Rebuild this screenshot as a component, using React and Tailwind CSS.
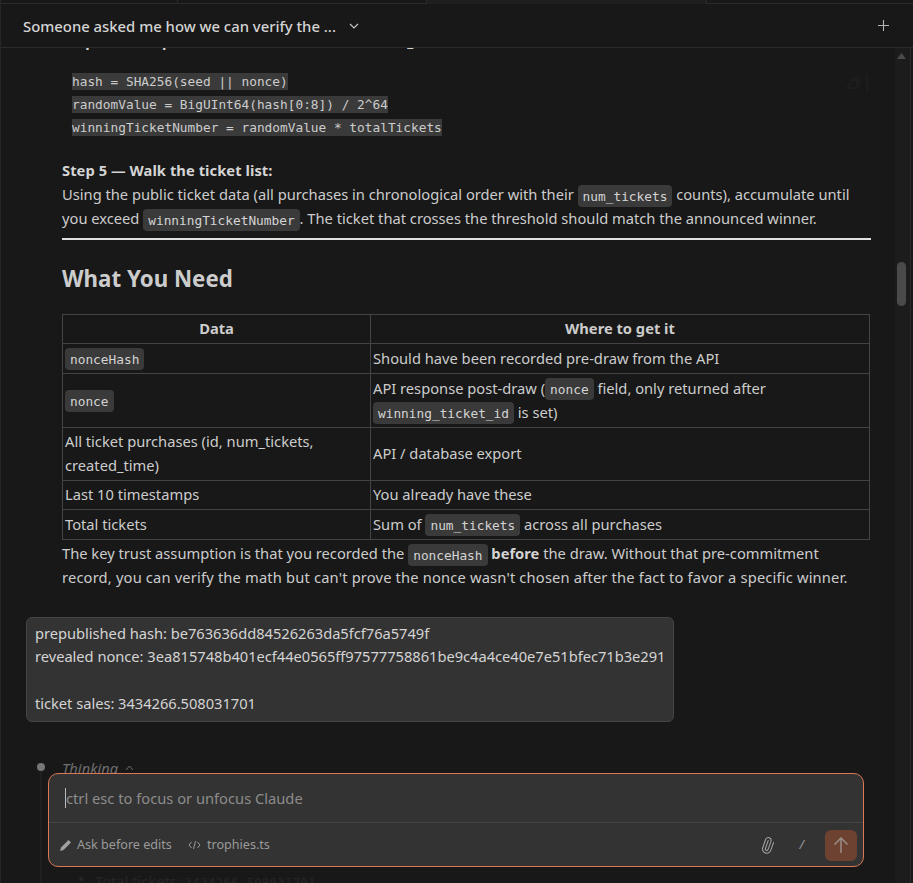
import React from "react";
import { Paperclip } from "lucide-react";

const C = ({ children }) => (
  <code className="bg-[#3a3a3a] text-[#d4d4d4] rounded-[4px] px-[5px] py-[3.5px] text-[12.8px] leading-none [font-family:'DejaVu_Sans_Mono',monospace]">{children}</code>
);

const rows = [
  ["h-[30px]", <C>nonceHash</C>, "Should have been recorded pre-draw from the API"],
  ["h-[54px]", <C>nonce</C>, <>API response post-draw (<C>nonce</C> field, only returned after<br /><C>winning_ticket_id</C> is set)</>],
  ["h-[53px]", <>All ticket purchases (id, num_tickets,<br />created_time)</>, "API / database export"],
  ["h-[29px]", "Last 10 timestamps", "You already have these"],
  ["h-[30px]", "Total tickets", <>Sum of <C>num_tickets</C> across all purchases</>],
];

const preLine = "bg-[#3a3a3a] h-[17px] leading-[17px]";
const cell = "border border-[#444444] px-[2px] pt-0 pb-[2px]";

export default function App() {
  return (
    <div className="w-[913px] h-[883px] relative overflow-hidden bg-[#181818] text-[#cccccc] text-[14.7px] leading-[24px] [font-family:'Noto_Sans',sans-serif] flex flex-col border-l border-[#262626]">
      <div className="h-[4px] shrink-0 flex">
        <div className="w-[177px] border-b border-r border-[#2b2b2b]" />
        <div className="w-[249px] border-b border-r border-[#2b2b2b]" />
        <div className="w-[279px] bg-[#1f1f1f]" />
        <div className="flex-1 border-b border-l border-[#2b2b2b]" />
      </div>
      <div className="h-[44px] shrink-0 flex items-center justify-between pl-[22px] pr-[23px] border-b border-[#2b2b2b]">
        <div className="flex items-center gap-[12px] text-[#d4d4d4] font-medium text-[14.85px]"><span>Someone asked me how we can verify the ...</span>
          <svg width="12" height="12" viewBox="0 0 12 12" fill="none" stroke="#c4c4c4" strokeWidth="1.2"><path d="M2 4l4 4 4-4" /></svg>
        </div>
        <svg width="13" height="13" viewBox="0 0 13 13" stroke="#b4b4b4" strokeWidth="1.1"><path d="M6.500 1v11M1 6.500h11" /></svg>
      </div>
      <div className="flex-1 overflow-hidden relative pl-[61px] pr-[42px]">
        <div className="-mt-[19px]">
          <p className="font-bold text-[#d4d4d4] whitespace-nowrap">Step 4 — Compute the random value and ticket_number:</p>
          <div className="relative pl-[10px] mt-[20px] flex flex-col items-start text-[12.8px] [font-family:'DejaVu_Sans_Mono',monospace]">
            <span className={preLine}>hash = SHA256(seed || nonce)</span>
            <span className={preLine + " mt-[6px]"}>randomValue = BigUInt64(hash[0:8]) / 2^64</span>
            <span className={preLine + " mt-[6px]"}>winningTicketNumber = randomValue * totalTickets</span>
            <svg className="absolute left-[783px] top-[1px]" width="24" height="18" viewBox="0 0 24 18" fill="none" stroke="#1d1d1d" strokeWidth="2"><path d="M2 14l5-8h5v8zM8 4h6v8M22 0v17" /></svg>
          </div>
          <p className="mt-[22px] whitespace-nowrap"><b className="font-bold text-[#d4d4d4] tracking-[0.06px]">Step 5 — Walk the ticket list:</b><br />
            Using the public ticket data (all purchases in chronological order with their <C>num_tickets</C> counts), accumulate until<br />
            you exceed <C>winningTicketNumber</C>. The ticket that crosses the threshold should match the announced winner.</p>
          <hr className="border-0 h-[2px] bg-[#e0e0e0] mt-[8px]" />
          <h2 className="text-[22.3px] font-bold mt-[24px] leading-[30px] text-[#cccccc]">What You Need</h2>
          <table className="w-[808px] mt-[20px] border-collapse table-fixed">
            <colgroup><col className="w-[308px]" /><col /></colgroup>
            <thead><tr className="h-[29px]"><th className={cell + " font-bold"}>Data</th><th className={cell + " font-bold"}>Where to get it</th></tr></thead>
            <tbody>
              {rows.map((r, i) => (
                <tr key={i} className={r[0]}>
                  <td className={cell}>{r[1]}</td>
                  <td className={cell}>{r[2]}</td>
                </tr>
              ))}
            </tbody>
          </table>
          <p className="mt-[1px] whitespace-nowrap">The key trust assumption is that you recorded the <C>nonceHash</C> <b className="font-bold text-[#d4d4d4]">before</b> the draw. Without that pre-commitment<br />
            <span className="tracking-[0.17px]">record, you can verify the math but can't prove the nonce wasn't chosen after the fact to favor a specific winner.</span></p>
          <div className="-ml-[36px] mt-[28px] w-[648px] h-[105px] box-border bg-[#333333] border border-[#454545] rounded-[6px] px-[8px] pt-[4px] leading-[23.3px] tracking-[-0.03px] text-[#d4d4d4] whitespace-nowrap">
            prepublished hash: be763636dd84526263da5fcf76a5749f<br />
            revealed nonce: 3ea815748b401ecf44e0565ff97577758861be9c4a4ce40e7e51bfec71b3e291<br /><br />
            ticket sales: 3434266.508031701
          </div>
          <div className="mt-[34px] italic text-[#6e6e6e] flex items-center gap-[7px]">Thinking
            <svg width="9" height="6" viewBox="0 0 9 6" fill="none" stroke="#6e6e6e"><path d="M1 5l3.500-4 3.500 4" /></svg>
          </div>
          <p className="mt-[89px] ml-[33px] text-[#262626] whitespace-nowrap">Total tickets: <span className="[font-family:'DejaVu_Sans_Mono',monospace] text-[12.8px]">3434266.508031701</span></p>
        </div>
        <div className="absolute left-[36px] top-[715px] w-[8px] h-[8px] rounded-full bg-[#777777]" />
        <div className="absolute left-[39px] top-[723px] bottom-0 w-[2px] bg-[#202020]" />
        <div className="absolute left-[78px] top-[829px] w-[4px] h-[4px] rounded-full bg-[#262626]" />
        <div className="absolute right-[2px] top-0 bottom-0 w-[16px] bg-[#1c1c1c] border-r border-[#2b2b2b]">
          <div className="absolute left-[2px] top-[214px] w-[9px] h-[44px] rounded-full bg-[#4a4a4a]" />
          <svg className="absolute left-[2px] top-[5px]" width="9" height="6" viewBox="0 0 9 6" fill="#4a4a4a"><path d="M4.500 0L9 6H0z" /></svg>
        </div>
      </div>
      <div className="absolute left-[47px] top-[773px] w-[816px] h-[94px] box-border bg-[#333333] border border-[#d97757] rounded-[10px] flex flex-col">
        <div className="h-[49px] shrink-0 border-b border-[#444444] flex items-center pl-[16px] text-[#8c8c8c]"><span className="border-l border-[#bbbbbb] h-[20px] leading-[20px]">ctrl esc to focus or unfocus Claude</span></div>
        <div className="flex-1 flex items-center pl-[11px] pr-[6px] pt-[1px] text-[12.6px] text-[#9a9a9a]">
          <svg className="mr-[5px]" width="12" height="12" viewBox="0 0 12 12" fill="#a0a0a0"><path d="M0 12l1-3.500L8.500 1 11 3.500 3.500 11z" /></svg>
          <span>Ask before edits</span>
          <svg className="ml-[16px] mr-[6px]" width="13" height="12" viewBox="0 0 13 12" fill="none" stroke="#9a9a9a"><path d="M3.500 3L1 6l2.500 3M9.500 3L12 6 9.500 9M7.500 2l-2 8" /></svg>
          <span>trophies.ts</span>
          <span className="ml-auto flex items-center">
            <Paperclip size={17} color="#a8a8a8" strokeWidth={1.4} className="rotate-[-25deg]" />
            <span className="ml-[24px] mr-[21px] italic">/</span>
            <span className="w-[32px] h-[31px] rounded-[6px] bg-[#6e4231] flex items-center justify-center">
              <svg width="16" height="18" viewBox="0 0 16 18" fill="none" stroke="#9a8d88" strokeWidth="1.500"><path d="M8 17V2M1.500 8.500L8 2l6.500 6.500" /></svg>
            </span>
          </span>
        </div>
      </div>
    </div>
  );
}
